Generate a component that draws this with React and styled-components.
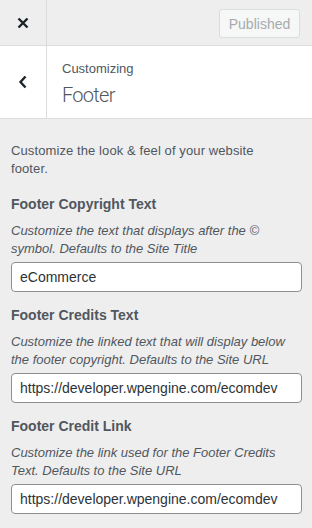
import React from "react";
import styled, { createGlobalStyle } from "styled-components";

const GlobalStyle = createGlobalStyle`
  html, body {
    margin: 0;
    padding: 0;
    background: #eeeeee;
  }
  body {
    font-family: "Liberation Sans", Arial, sans-serif;
    -webkit-font-smoothing: antialiased;
  }
`;

const Panel = styled.div`
  width: 312px;
  height: 528px;
  background: #eeeeee;
  overflow: hidden;
`;

const TopBar = styled.div`
  display: flex;
  align-items: center;
  height: 45px;
  border-bottom: 1px solid #dddddd;
  background: #eeeeee;
`;

const IconCell = styled.div`
  display: flex;
  align-items: center;
  justify-content: center;
  width: 46px;
  height: 100%;
  border-right: 1px solid #dddddd;
  color: #1d2327;
  flex-shrink: 0;
`;

const Published = styled.div`
  margin: 2px 12px 0 auto;
  width: 81px;
  height: 29px;
  box-sizing: border-box;
  display: flex;
  align-items: center;
  justify-content: center;
  border: 1px solid #dcdcde;
  border-radius: 3px;
  background: #f6f7f7;
  color: #a7aaad;
  font-size: 14px;
`;

const SectionHead = styled.div`
  display: flex;
  height: 72px;
  background: #ffffff;
  border-bottom: 1px solid #dddddd;
`;

const TitleBlock = styled.div`
  display: flex;
  flex-direction: column;
  padding: 14px 0 0 15px;
  color: #50575e;
`;

const Eyebrow = styled.span`
  font-size: 13px;
  line-height: 18px;
`;

const Title = styled.span`
  font-family: Roboto, "Liberation Sans", sans-serif;
  font-weight: 300;
  font-size: 20px;
  letter-spacing: -0.7px;
  line-height: 28px;
  margin-top: 3px;
`;

const Content = styled.div`
  padding: 23px 10px 0 11px;
  color: #50575e;
`;

const Intro = styled.p`
  margin: 0 0 16px;
  padding-right: 20px;
  font-size: 13px;
  letter-spacing: 0.1px;
  line-height: 18px;
`;

const Control = styled.div`
  display: flex;
  flex-direction: column;
  margin-bottom: 13px;
`;

const Label = styled.label`
  font-size: 14px;
  font-weight: 700;
  line-height: 20px;
  margin-bottom: 8px;
`;

const Hint = styled.span`
  font-size: 13px;
  font-style: italic;
  line-height: 18px;
  margin-bottom: 4px;
`;

const TextInput = styled.input`
  box-sizing: border-box;
  width: 100%;
  height: 30px;
  padding: 0 8px;
  border: 1px solid #8c8f94;
  border-radius: 4px;
  background: #ffffff;
  color: #2c3338;
  font-family: "Liberation Sans", Arial, sans-serif;
  font-size: 14px;
  outline: none;
`;

const fields = [
  {
    label: "Footer Copyright Text",
    hint: "Customize the text that displays after the © symbol. Defaults to the Site Title",
    value: "eCommerce",
  },
  {
    label: "Footer Credits Text",
    hint: "Customize the linked text that will display below the footer copyright. Defaults to the Site URL",
    value: "https://developer.wpengine.com/ecomdev",
  },
  {
    label: "Footer Credit Link",
    hint: "Customize the link used for the Footer Credits Text. Defaults to the Site URL",
    value: "https://developer.wpengine.com/ecomdev",
  },
];

const App = () => (
  <Panel>
    <GlobalStyle />
    <TopBar>
      <IconCell>
        <svg width="12" height="12" viewBox="0 0 12 12">
          <path d="M1.5 1.5l9 9M10.5 1.5l-9 9" stroke="currentColor" strokeWidth="2.4" />
        </svg>
      </IconCell>
      <Published>Published</Published>
    </TopBar>
    <SectionHead>
      <IconCell>
        <svg width="10" height="14" viewBox="0 0 10 14">
          <path d="M7.5 1.5L2.5 7l5 5.5" fill="none" stroke="currentColor" strokeWidth="2.4" />
        </svg>
      </IconCell>
      <TitleBlock>
        <Eyebrow>Customizing</Eyebrow>
        <Title>Footer</Title>
      </TitleBlock>
    </SectionHead>
    <Content>
      <Intro>Customize the look &amp; feel of your website footer.</Intro>
      {fields.map((f) => (
        <Control key={f.label}>
          <Label>{f.label}</Label>
          <Hint>{f.hint}</Hint>
          <TextInput defaultValue={f.value} />
        </Control>
      ))}
    </Content>
  </Panel>
);

export default App;
